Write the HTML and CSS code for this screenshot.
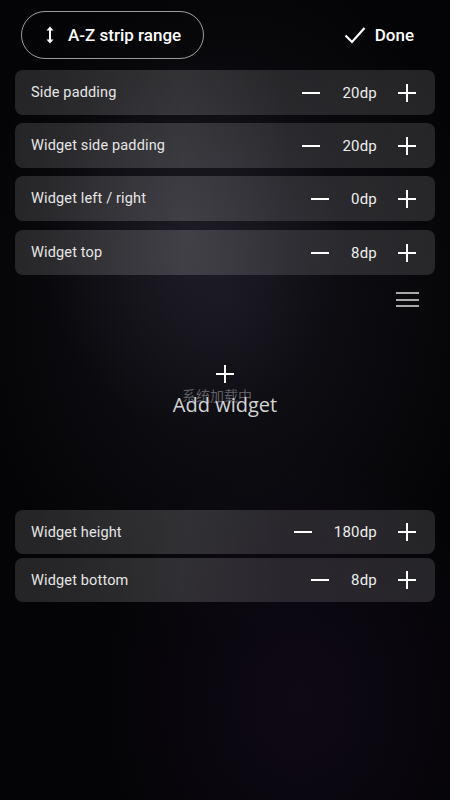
FILE: index.html
```html
<!DOCTYPE html>
<html>
<head>
<meta charset="utf-8">
<link rel="stylesheet" href="styles.css">
</head>
<body>
<div class="page">
  <header class="top">
    <div class="pill">
      <svg class="updown" width="10" height="20" viewBox="0 0 10 20"><path d="M5 3v14" stroke="#fff" stroke-width="2"/><path d="M1.5 5.5L5 1.5L8.5 5.5Z M1.5 14.5L5 18.5L8.5 14.5Z" fill="#fff"/></svg>
      <span>A-Z strip range</span>
    </div>
    <div class="done">
      <svg width="22" height="18" viewBox="0 0 22 18"><path d="M1.5 9.5L8 16L20.5 2" stroke="#fff" stroke-width="2.2" fill="none"/></svg>
      <span>Done</span>
    </div>
  </header>

  <div class="rows">
    <div class="row"><span class="label">Side padding</span><div class="ctl"><i class="minus"></i><span class="val">20dp</span><i class="plus"></i></div></div>
    <div class="row"><span class="label">Widget side padding</span><div class="ctl"><i class="minus"></i><span class="val">20dp</span><i class="plus"></i></div></div>
    <div class="row"><span class="label">Widget left / right</span><div class="ctl"><i class="minus"></i><span class="val">0dp</span><i class="plus"></i></div></div>
    <div class="row r4"><span class="label">Widget top</span><div class="ctl"><i class="minus"></i><span class="val">8dp</span><i class="plus"></i></div></div>
  </div>

  <section class="widget">
    <div class="menu"><i></i><i></i><i></i></div>
    <i class="bigplus"></i>
    <div class="caption">
      <span class="loading">系统加载中</span>
      <span class="add">Add widget</span>
    </div>
  </section>

  <div class="rows bottom">
    <div class="row"><span class="label">Widget height</span><div class="ctl"><i class="minus"></i><span class="val">180dp</span><i class="plus"></i></div></div>
    <div class="row"><span class="label">Widget bottom</span><div class="ctl"><i class="minus"></i><span class="val">8dp</span><i class="plus"></i></div></div>
  </div>
</div>
</body>
</html>
```

FILE: styles.css
```css
html, body {
  margin: 0;
  padding: 0;
  height: 800px;
  overflow: hidden;
}
body {
  background:
    radial-gradient(ellipse 150px 190px at 190px 240px, rgba(60,58,72,0.3), rgba(0,0,0,0) 100%),
    radial-gradient(ellipse 260px 340px at 230px 300px, rgba(26,24,34,0.7), rgba(0,0,0,0) 100%),
    radial-gradient(ellipse 200px 250px at 300px 700px, rgba(18,10,26,0.8), rgba(0,0,0,0) 100%),
    #040406;
  font-family: Roboto, "Liberation Sans", sans-serif;
  color: #fff;
}
.page {
  padding: 0 15px;
}
.top {
  height: 70px;
  display: flex;
  align-items: flex-start;
  justify-content: space-between;
}
.pill {
  margin-top: 11px;
  margin-left: 6px;
  height: 46px;
  width: 181px;
  border: 1px solid rgba(255,255,255,0.6);
  border-radius: 24px;
  display: flex;
  align-items: center;
  font-size: 17px;
  font-weight: 500;
}
.updown {
  margin-left: 23px;
  margin-right: 13px;
}
.done {
  margin-top: 25px;
  margin-right: 21px;
  display: flex;
  align-items: center;
  gap: 9px;
  font-size: 17px;
  font-weight: 500;
}
.rows {
  display: flex;
  flex-direction: column;
  gap: 8px;
}
.row {
  height: 45px;
  border-radius: 8px;
  background: linear-gradient(90deg, rgba(255,255,255,0.13), rgba(255,255,255,0.16) 40%, rgba(255,255,255,0.12) 65%, rgba(255,255,255,0.13));
  display: flex;
  align-items: center;
  justify-content: space-between;
  padding: 0 19px 0 16px;
}
.row.r4 {
  margin-top: 1px;
}
.label {
  font-size: 14.5px;
  letter-spacing: 0.15px;
  color: #e6e6e6;
}
.ctl {
  display: flex;
  align-items: center;
}
.val {
  font-size: 15px;
  color: #eee;
  letter-spacing: 0.2px;
  margin: 0 21px 0 22px;
}
.minus {
  width: 18px;
  height: 2px;
  background: #fff;
  display: block;
}
.plus {
  width: 18px;
  height: 18px;
  position: relative;
  display: block;
}
.plus::before, .plus::after, .bigplus::before, .bigplus::after {
  content: "";
  position: absolute;
  background: #fff;
}
.plus::before { left: 0; right: 0; top: 8px; height: 2.4px; }
.plus::after { top: 0; bottom: 0; left: 8px; width: 2.4px; }

.widget {
  height: 235px;
  display: flex;
  flex-direction: column;
  align-items: center;
}
.menu {
  align-self: flex-end;
  margin: 17px 16px 0 0;
  width: 23px;
  display: flex;
  flex-direction: column;
  gap: 4.5px;
}
.menu i {
  display: block;
  height: 2px;
  background: #a8a8a8;
}
.bigplus {
  display: block;
  position: relative;
  width: 18px;
  height: 18px;
  margin-top: 58px;
}
.bigplus::before { left: 0; right: 0; top: 8px; height: 2px; }
.bigplus::after { top: 0; bottom: 0; left: 8px; width: 2px; }
.caption {
  display: grid;
  justify-items: center;
  margin-top: 2px;
}
.loading, .add {
  grid-area: 1 / 1;
}
.loading {
  font-family: "Noto Sans CJK SC", sans-serif;
  font-size: 14px;
  color: rgba(150,150,155,0.6);
  margin-right: 16px;
  margin-top: 0;
  line-height: 20px;
}
.add {
  font-family: "Open Sans", "Noto Sans", sans-serif;
  font-size: 20px;
  color: #d4d4d4;
  margin-top: 8px;
  line-height: 24px;
}
.bottom {
  gap: 4px;
}
.bottom .row {
  height: 44px;
}
```
